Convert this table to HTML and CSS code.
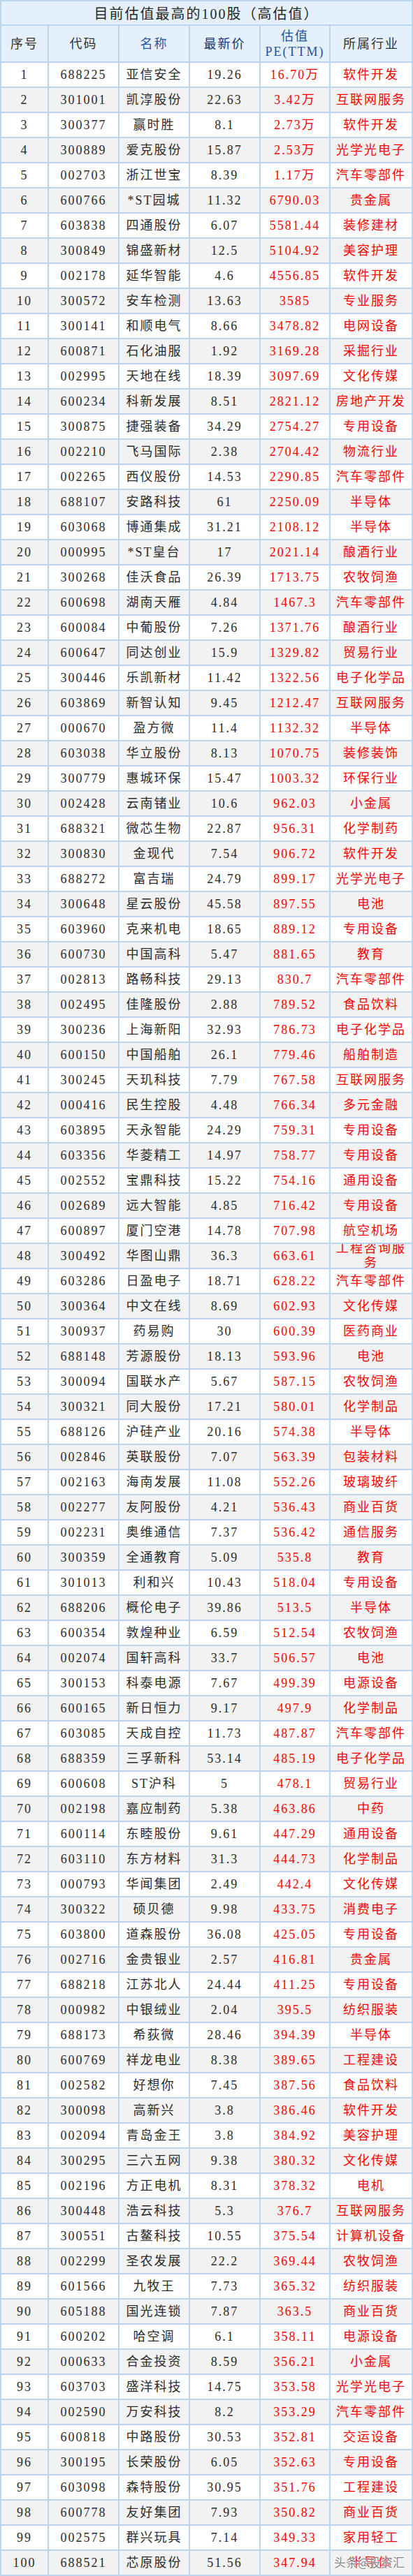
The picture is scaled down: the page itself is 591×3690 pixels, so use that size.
FILE: index.html
```html
<!DOCTYPE html>
<html lang="zh-CN">
<head>
<meta charset="utf-8">
<title>目前估值最高的100股</title>
<link rel="stylesheet" href="styles.css">
</head>
<body>
<div class="sheet">
  <div class="title">目前估值最高的100股（高估值）</div>
  <div class="head">
    <span class="h h-no">序号</span>
    <span class="h h-code">代码</span>
    <span class="h h-name">名称</span>
    <span class="h h-price">最新价</span>
    <span class="h h-pe">估值<br>PE(TTM)</span>
    <span class="h h-ind">所属行业</span>
  </div>
  <div class="row"><span class="c">1</span><span class="c">688225</span><span class="c">亚信安全</span><span class="c">19.26</span><span class="c red">16.70万</span><span class="c red">软件开发</span></div>
  <div class="row"><span class="c">2</span><span class="c">301001</span><span class="c">凯淳股份</span><span class="c">22.63</span><span class="c red">3.42万</span><span class="c red">互联网服务</span></div>
  <div class="row"><span class="c">3</span><span class="c">300377</span><span class="c">赢时胜</span><span class="c">8.1</span><span class="c red">2.73万</span><span class="c red">软件开发</span></div>
  <div class="row"><span class="c">4</span><span class="c">300889</span><span class="c">爱克股份</span><span class="c">15.87</span><span class="c red">2.53万</span><span class="c red">光学光电子</span></div>
  <div class="row"><span class="c">5</span><span class="c">002703</span><span class="c">浙江世宝</span><span class="c">8.39</span><span class="c red">1.17万</span><span class="c red">汽车零部件</span></div>
  <div class="row"><span class="c">6</span><span class="c">600766</span><span class="c">*ST园城</span><span class="c">11.32</span><span class="c red">6790.03</span><span class="c red">贵金属</span></div>
  <div class="row"><span class="c">7</span><span class="c">603838</span><span class="c">四通股份</span><span class="c">6.07</span><span class="c red">5581.44</span><span class="c red">装修建材</span></div>
  <div class="row"><span class="c">8</span><span class="c">300849</span><span class="c">锦盛新材</span><span class="c">12.5</span><span class="c red">5104.92</span><span class="c red">美容护理</span></div>
  <div class="row"><span class="c">9</span><span class="c">002178</span><span class="c">延华智能</span><span class="c">4.6</span><span class="c red">4556.85</span><span class="c red">软件开发</span></div>
  <div class="row"><span class="c">10</span><span class="c">300572</span><span class="c">安车检测</span><span class="c">13.63</span><span class="c red">3585</span><span class="c red">专业服务</span></div>
  <div class="row"><span class="c">11</span><span class="c">300141</span><span class="c">和顺电气</span><span class="c">8.66</span><span class="c red">3478.82</span><span class="c red">电网设备</span></div>
  <div class="row"><span class="c">12</span><span class="c">600871</span><span class="c">石化油服</span><span class="c">1.92</span><span class="c red">3169.28</span><span class="c red">采掘行业</span></div>
  <div class="row"><span class="c">13</span><span class="c">002995</span><span class="c">天地在线</span><span class="c">18.39</span><span class="c red">3097.69</span><span class="c red">文化传媒</span></div>
  <div class="row"><span class="c">14</span><span class="c">600234</span><span class="c">科新发展</span><span class="c">8.51</span><span class="c red">2821.12</span><span class="c red">房地产开发</span></div>
  <div class="row"><span class="c">15</span><span class="c">300875</span><span class="c">捷强装备</span><span class="c">34.29</span><span class="c red">2754.27</span><span class="c red">专用设备</span></div>
  <div class="row"><span class="c">16</span><span class="c">002210</span><span class="c">飞马国际</span><span class="c">2.38</span><span class="c red">2704.42</span><span class="c red">物流行业</span></div>
  <div class="row"><span class="c">17</span><span class="c">002265</span><span class="c">西仪股份</span><span class="c">14.53</span><span class="c red">2290.85</span><span class="c red">汽车零部件</span></div>
  <div class="row"><span class="c">18</span><span class="c">688107</span><span class="c">安路科技</span><span class="c">61</span><span class="c red">2250.09</span><span class="c red">半导体</span></div>
  <div class="row"><span class="c">19</span><span class="c">603068</span><span class="c">博通集成</span><span class="c">31.21</span><span class="c red">2108.12</span><span class="c red">半导体</span></div>
  <div class="row"><span class="c">20</span><span class="c">000995</span><span class="c">*ST皇台</span><span class="c">17</span><span class="c red">2021.14</span><span class="c red">酿酒行业</span></div>
  <div class="row"><span class="c">21</span><span class="c">300268</span><span class="c">佳沃食品</span><span class="c">26.39</span><span class="c red">1713.75</span><span class="c red">农牧饲渔</span></div>
  <div class="row"><span class="c">22</span><span class="c">600698</span><span class="c">湖南天雁</span><span class="c">4.84</span><span class="c red">1467.3</span><span class="c red">汽车零部件</span></div>
  <div class="row"><span class="c">23</span><span class="c">600084</span><span class="c">中葡股份</span><span class="c">7.26</span><span class="c red">1371.76</span><span class="c red">酿酒行业</span></div>
  <div class="row"><span class="c">24</span><span class="c">600647</span><span class="c">同达创业</span><span class="c">15.9</span><span class="c red">1329.82</span><span class="c red">贸易行业</span></div>
  <div class="row"><span class="c">25</span><span class="c">300446</span><span class="c">乐凯新材</span><span class="c">11.42</span><span class="c red">1322.56</span><span class="c red">电子化学品</span></div>
  <div class="row"><span class="c">26</span><span class="c">603869</span><span class="c">新智认知</span><span class="c">9.45</span><span class="c red">1212.47</span><span class="c red">互联网服务</span></div>
  <div class="row"><span class="c">27</span><span class="c">000670</span><span class="c">盈方微</span><span class="c">11.4</span><span class="c red">1132.32</span><span class="c red">半导体</span></div>
  <div class="row"><span class="c">28</span><span class="c">603038</span><span class="c">华立股份</span><span class="c">8.13</span><span class="c red">1070.75</span><span class="c red">装修装饰</span></div>
  <div class="row"><span class="c">29</span><span class="c">300779</span><span class="c">惠城环保</span><span class="c">15.47</span><span class="c red">1003.32</span><span class="c red">环保行业</span></div>
  <div class="row"><span class="c">30</span><span class="c">002428</span><span class="c">云南锗业</span><span class="c">10.6</span><span class="c red">962.03</span><span class="c red">小金属</span></div>
  <div class="row"><span class="c">31</span><span class="c">688321</span><span class="c">微芯生物</span><span class="c">22.87</span><span class="c red">956.31</span><span class="c red">化学制药</span></div>
  <div class="row"><span class="c">32</span><span class="c">300830</span><span class="c">金现代</span><span class="c">7.54</span><span class="c red">906.72</span><span class="c red">软件开发</span></div>
  <div class="row"><span class="c">33</span><span class="c">688272</span><span class="c">富吉瑞</span><span class="c">24.79</span><span class="c red">899.17</span><span class="c red">光学光电子</span></div>
  <div class="row"><span class="c">34</span><span class="c">300648</span><span class="c">星云股份</span><span class="c">45.58</span><span class="c red">897.55</span><span class="c red">电池</span></div>
  <div class="row"><span class="c">35</span><span class="c">603960</span><span class="c">克来机电</span><span class="c">18.65</span><span class="c red">889.12</span><span class="c red">专用设备</span></div>
  <div class="row"><span class="c">36</span><span class="c">600730</span><span class="c">中国高科</span><span class="c">5.47</span><span class="c red">881.65</span><span class="c red">教育</span></div>
  <div class="row"><span class="c">37</span><span class="c">002813</span><span class="c">路畅科技</span><span class="c">29.13</span><span class="c red">830.7</span><span class="c red">汽车零部件</span></div>
  <div class="row"><span class="c">38</span><span class="c">002495</span><span class="c">佳隆股份</span><span class="c">2.88</span><span class="c red">789.52</span><span class="c red">食品饮料</span></div>
  <div class="row"><span class="c">39</span><span class="c">300236</span><span class="c">上海新阳</span><span class="c">32.93</span><span class="c red">786.73</span><span class="c red">电子化学品</span></div>
  <div class="row"><span class="c">40</span><span class="c">600150</span><span class="c">中国船舶</span><span class="c">26.1</span><span class="c red">779.46</span><span class="c red">船舶制造</span></div>
  <div class="row"><span class="c">41</span><span class="c">300245</span><span class="c">天玑科技</span><span class="c">7.79</span><span class="c red">767.58</span><span class="c red">互联网服务</span></div>
  <div class="row"><span class="c">42</span><span class="c">000416</span><span class="c">民生控股</span><span class="c">4.48</span><span class="c red">766.34</span><span class="c red">多元金融</span></div>
  <div class="row"><span class="c">43</span><span class="c">603895</span><span class="c">天永智能</span><span class="c">24.29</span><span class="c red">759.31</span><span class="c red">专用设备</span></div>
  <div class="row"><span class="c">44</span><span class="c">603356</span><span class="c">华菱精工</span><span class="c">14.97</span><span class="c red">758.77</span><span class="c red">专用设备</span></div>
  <div class="row"><span class="c">45</span><span class="c">002552</span><span class="c">宝鼎科技</span><span class="c">15.22</span><span class="c red">754.16</span><span class="c red">通用设备</span></div>
  <div class="row"><span class="c">46</span><span class="c">002689</span><span class="c">远大智能</span><span class="c">4.85</span><span class="c red">716.42</span><span class="c red">专用设备</span></div>
  <div class="row"><span class="c">47</span><span class="c">600897</span><span class="c">厦门空港</span><span class="c">14.78</span><span class="c red">707.98</span><span class="c red">航空机场</span></div>
  <div class="row"><span class="c">48</span><span class="c">300492</span><span class="c">华图山鼎</span><span class="c">36.3</span><span class="c red">663.61</span><span class="c red wrap">工程咨询服务</span></div>
  <div class="row"><span class="c">49</span><span class="c">603286</span><span class="c">日盈电子</span><span class="c">18.71</span><span class="c red">628.22</span><span class="c red">汽车零部件</span></div>
  <div class="row"><span class="c">50</span><span class="c">300364</span><span class="c">中文在线</span><span class="c">8.69</span><span class="c red">602.93</span><span class="c red">文化传媒</span></div>
  <div class="row"><span class="c">51</span><span class="c">300937</span><span class="c">药易购</span><span class="c">30</span><span class="c red">600.39</span><span class="c red">医药商业</span></div>
  <div class="row"><span class="c">52</span><span class="c">688148</span><span class="c">芳源股份</span><span class="c">18.13</span><span class="c red">593.96</span><span class="c red">电池</span></div>
  <div class="row"><span class="c">53</span><span class="c">300094</span><span class="c">国联水产</span><span class="c">5.67</span><span class="c red">587.15</span><span class="c red">农牧饲渔</span></div>
  <div class="row"><span class="c">54</span><span class="c">300321</span><span class="c">同大股份</span><span class="c">17.21</span><span class="c red">580.01</span><span class="c red">化学制品</span></div>
  <div class="row"><span class="c">55</span><span class="c">688126</span><span class="c">沪硅产业</span><span class="c">20.16</span><span class="c red">574.38</span><span class="c red">半导体</span></div>
  <div class="row"><span class="c">56</span><span class="c">002846</span><span class="c">英联股份</span><span class="c">7.07</span><span class="c red">563.39</span><span class="c red">包装材料</span></div>
  <div class="row"><span class="c">57</span><span class="c">002163</span><span class="c">海南发展</span><span class="c">11.08</span><span class="c red">552.26</span><span class="c red">玻璃玻纤</span></div>
  <div class="row"><span class="c">58</span><span class="c">002277</span><span class="c">友阿股份</span><span class="c">4.21</span><span class="c red">536.43</span><span class="c red">商业百货</span></div>
  <div class="row"><span class="c">59</span><span class="c">002231</span><span class="c">奥维通信</span><span class="c">7.37</span><span class="c red">536.42</span><span class="c red">通信服务</span></div>
  <div class="row"><span class="c">60</span><span class="c">300359</span><span class="c">全通教育</span><span class="c">5.09</span><span class="c red">535.8</span><span class="c red">教育</span></div>
  <div class="row"><span class="c">61</span><span class="c">301013</span><span class="c">利和兴</span><span class="c">10.43</span><span class="c red">518.04</span><span class="c red">专用设备</span></div>
  <div class="row"><span class="c">62</span><span class="c">688206</span><span class="c">概伦电子</span><span class="c">39.86</span><span class="c red">513.5</span><span class="c red">半导体</span></div>
  <div class="row"><span class="c">63</span><span class="c">600354</span><span class="c">敦煌种业</span><span class="c">6.59</span><span class="c red">512.54</span><span class="c red">农牧饲渔</span></div>
  <div class="row"><span class="c">64</span><span class="c">002074</span><span class="c">国轩高科</span><span class="c">33.7</span><span class="c red">506.57</span><span class="c red">电池</span></div>
  <div class="row"><span class="c">65</span><span class="c">300153</span><span class="c">科泰电源</span><span class="c">7.67</span><span class="c red">499.39</span><span class="c red">电源设备</span></div>
  <div class="row"><span class="c">66</span><span class="c">600165</span><span class="c">新日恒力</span><span class="c">9.17</span><span class="c red">497.9</span><span class="c red">化学制品</span></div>
  <div class="row"><span class="c">67</span><span class="c">603085</span><span class="c">天成自控</span><span class="c">11.73</span><span class="c red">487.87</span><span class="c red">汽车零部件</span></div>
  <div class="row"><span class="c">68</span><span class="c">688359</span><span class="c">三孚新科</span><span class="c">53.14</span><span class="c red">485.19</span><span class="c red">电子化学品</span></div>
  <div class="row"><span class="c">69</span><span class="c">600608</span><span class="c">ST沪科</span><span class="c">5</span><span class="c red">478.1</span><span class="c red">贸易行业</span></div>
  <div class="row"><span class="c">70</span><span class="c">002198</span><span class="c">嘉应制药</span><span class="c">5.38</span><span class="c red">463.86</span><span class="c red">中药</span></div>
  <div class="row"><span class="c">71</span><span class="c">600114</span><span class="c">东睦股份</span><span class="c">9.61</span><span class="c red">447.29</span><span class="c red">通用设备</span></div>
  <div class="row"><span class="c">72</span><span class="c">603110</span><span class="c">东方材料</span><span class="c">31.3</span><span class="c red">444.73</span><span class="c red">化学制品</span></div>
  <div class="row"><span class="c">73</span><span class="c">000793</span><span class="c">华闻集团</span><span class="c">2.49</span><span class="c red">442.4</span><span class="c red">文化传媒</span></div>
  <div class="row"><span class="c">74</span><span class="c">300322</span><span class="c">硕贝德</span><span class="c">9.98</span><span class="c red">433.75</span><span class="c red">消费电子</span></div>
  <div class="row"><span class="c">75</span><span class="c">603800</span><span class="c">道森股份</span><span class="c">36.08</span><span class="c red">425.05</span><span class="c red">专用设备</span></div>
  <div class="row"><span class="c">76</span><span class="c">002716</span><span class="c">金贵银业</span><span class="c">2.57</span><span class="c red">416.81</span><span class="c red">贵金属</span></div>
  <div class="row"><span class="c">77</span><span class="c">688218</span><span class="c">江苏北人</span><span class="c">24.44</span><span class="c red">411.25</span><span class="c red">专用设备</span></div>
  <div class="row"><span class="c">78</span><span class="c">000982</span><span class="c">中银绒业</span><span class="c">2.04</span><span class="c red">395.5</span><span class="c red">纺织服装</span></div>
  <div class="row"><span class="c">79</span><span class="c">688173</span><span class="c">希荻微</span><span class="c">28.46</span><span class="c red">394.39</span><span class="c red">半导体</span></div>
  <div class="row"><span class="c">80</span><span class="c">600769</span><span class="c">祥龙电业</span><span class="c">8.38</span><span class="c red">389.65</span><span class="c red">工程建设</span></div>
  <div class="row"><span class="c">81</span><span class="c">002582</span><span class="c">好想你</span><span class="c">7.45</span><span class="c red">387.56</span><span class="c red">食品饮料</span></div>
  <div class="row"><span class="c">82</span><span class="c">300098</span><span class="c">高新兴</span><span class="c">3.8</span><span class="c red">386.46</span><span class="c red">软件开发</span></div>
  <div class="row"><span class="c">83</span><span class="c">002094</span><span class="c">青岛金王</span><span class="c">3.8</span><span class="c red">384.92</span><span class="c red">美容护理</span></div>
  <div class="row"><span class="c">84</span><span class="c">300295</span><span class="c">三六五网</span><span class="c">9.38</span><span class="c red">380.32</span><span class="c red">文化传媒</span></div>
  <div class="row"><span class="c">85</span><span class="c">002196</span><span class="c">方正电机</span><span class="c">8.31</span><span class="c red">378.32</span><span class="c red">电机</span></div>
  <div class="row"><span class="c">86</span><span class="c">300448</span><span class="c">浩云科技</span><span class="c">5.3</span><span class="c red">376.7</span><span class="c red">互联网服务</span></div>
  <div class="row"><span class="c">87</span><span class="c">300551</span><span class="c">古鳌科技</span><span class="c">10.55</span><span class="c red">375.54</span><span class="c red">计算机设备</span></div>
  <div class="row"><span class="c">88</span><span class="c">002299</span><span class="c">圣农发展</span><span class="c">22.2</span><span class="c red">369.44</span><span class="c red">农牧饲渔</span></div>
  <div class="row"><span class="c">89</span><span class="c">601566</span><span class="c">九牧王</span><span class="c">7.73</span><span class="c red">365.32</span><span class="c red">纺织服装</span></div>
  <div class="row"><span class="c">90</span><span class="c">605188</span><span class="c">国光连锁</span><span class="c">7.87</span><span class="c red">363.5</span><span class="c red">商业百货</span></div>
  <div class="row"><span class="c">91</span><span class="c">600202</span><span class="c">哈空调</span><span class="c">6.1</span><span class="c red">358.11</span><span class="c red">电源设备</span></div>
  <div class="row"><span class="c">92</span><span class="c">000633</span><span class="c">合金投资</span><span class="c">8.59</span><span class="c red">356.21</span><span class="c red">小金属</span></div>
  <div class="row"><span class="c">93</span><span class="c">603703</span><span class="c">盛洋科技</span><span class="c">14.75</span><span class="c red">353.58</span><span class="c red">光学光电子</span></div>
  <div class="row"><span class="c">94</span><span class="c">002590</span><span class="c">万安科技</span><span class="c">8.2</span><span class="c red">353.29</span><span class="c red">汽车零部件</span></div>
  <div class="row"><span class="c">95</span><span class="c">600818</span><span class="c">中路股份</span><span class="c">30.53</span><span class="c red">352.81</span><span class="c red">交运设备</span></div>
  <div class="row"><span class="c">96</span><span class="c">300195</span><span class="c">长荣股份</span><span class="c">6.05</span><span class="c red">352.63</span><span class="c red">专用设备</span></div>
  <div class="row"><span class="c">97</span><span class="c">603098</span><span class="c">森特股份</span><span class="c">30.95</span><span class="c red">351.76</span><span class="c red">工程建设</span></div>
  <div class="row"><span class="c">98</span><span class="c">600778</span><span class="c">友好集团</span><span class="c">7.93</span><span class="c red">350.82</span><span class="c red">商业百货</span></div>
  <div class="row"><span class="c">99</span><span class="c">002575</span><span class="c">群兴玩具</span><span class="c">7.14</span><span class="c red">349.33</span><span class="c red">家用轻工</span></div>
  <div class="row"><span class="c">100</span><span class="c">688521</span><span class="c">芯原股份</span><span class="c">51.56</span><span class="c red">347.94</span><span class="c red">半导体</span></div>
  <div class="watermark">头条@投资汇</div>
</div>
</body>
</html>
```
FILE: styles.css
```css
html, body {
  margin: 0;
  padding: 0;
  background: #ffffff;
}

.sheet {
  position: relative;
  width: 591px;
  box-sizing: border-box;
  display: grid;
  grid-template-columns: 66px 99px 99px 99px 98px 116px;
  grid-template-rows: 33px 51px repeat(100, 34px);
  gap: 2px;
  padding: 2px;
  background: #bdd5ec;
  font-family: "Liberation Serif", "Noto Sans CJK SC", serif;
  color: #2b2b2b;
}

.title {
  grid-column: 1 / -1;
  display: flex;
  align-items: center;
  justify-content: center;
  background: #e4f1fc;
  font-size: 20px;
  letter-spacing: 2px;
  color: #262626;
}

.head,
.row {
  display: contents;
}

.h {
  display: flex;
  align-items: center;
  justify-content: center;
  text-align: center;
  background: #e4f1fc;
  font-size: 18px;
  letter-spacing: 2px;
  line-height: 22px;
  color: #333333;
}

.h-no { color: #3a3026; }
.h-name { color: #2d56a6; }
.h-price { color: #22357a; }
.h-pe { color: #1f4fa2; }

.c {
  display: flex;
  align-items: center;
  justify-content: center;
  text-align: center;
  overflow: hidden;
  background: #ffffff;
  font-size: 18px;
  letter-spacing: 2px;
  line-height: 21px;
  white-space: nowrap;
}

.row:nth-child(even) .c {
  background: #f2f2f2;
}

.red {
  color: #ff0000;
}

.wrap {
  white-space: normal;
  word-break: break-all;
}

.watermark {
  position: absolute;
  right: 12px;
  bottom: 8px;
  font-family: "Noto Sans CJK SC", sans-serif;
  font-size: 17px;
  color: rgba(110, 110, 110, 0.85);
  text-shadow: 0 0 2px #ffffff, 0 0 2px #ffffff;
  letter-spacing: 0;
}
```
